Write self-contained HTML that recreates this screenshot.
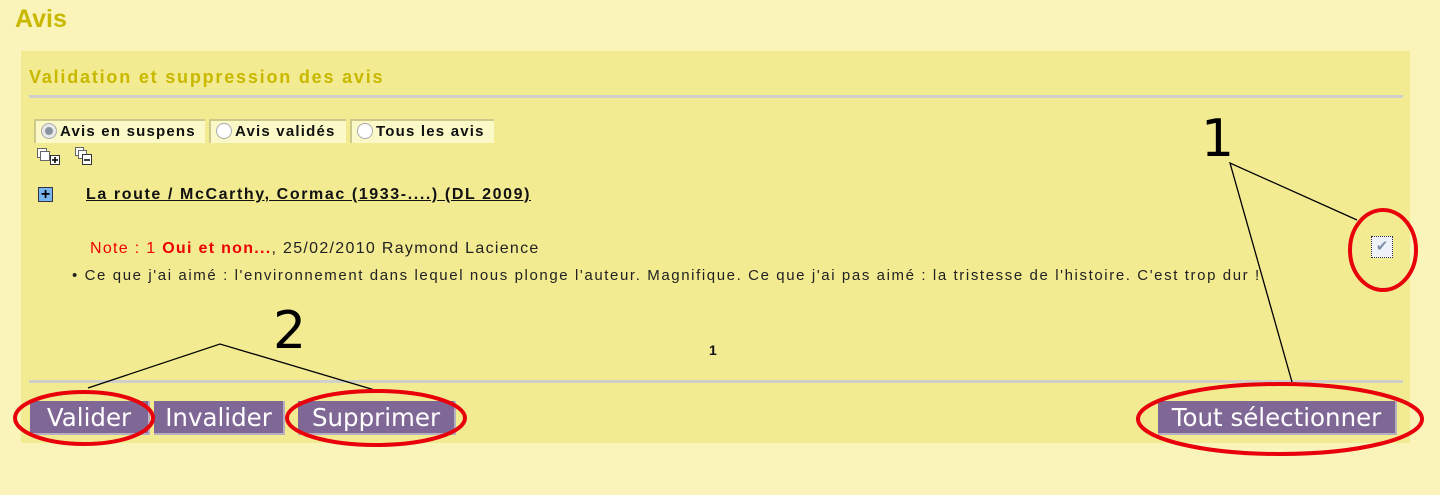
<!DOCTYPE html>
<html><head><meta charset="utf-8"><style>
body{margin:0;width:1440px;height:495px;background:#faf4bb;position:relative;overflow:hidden;font-family:"Liberation Sans",sans-serif}
.a{position:absolute}
.panel{left:21px;top:51px;width:1389px;height:392px;background:#f3eb92}
.hr{height:3px;background:#cfcfcb;left:29px;width:1374px}
.btn{position:absolute;top:401px;height:34px;background:#806896;color:#fff;font-family:"DejaVu Sans",sans-serif;font-size:24.5px;line-height:33px;text-align:center;border-right:2px solid #b7b0c0;border-bottom:2px solid #b7b0c0;box-sizing:border-box;white-space:nowrap}
.tab{position:absolute;top:119px;height:24px;background:#fbf9c8;border-left:2px solid #cdc98a;border-top:2px solid #cdc98a;box-sizing:border-box;font-weight:bold;font-size:15px;line-height:21px;color:#111;letter-spacing:1.2px;white-space:nowrap}
.rad{display:inline-block;width:16px;height:16px;border-radius:50%;border:1px solid #aaa;background:#fff;vertical-align:-3px;margin:0 3px 0 5px;box-sizing:border-box}
</style></head><body>
<div class="a" style="left:15px;top:5px;font-size:25px;font-weight:bold;color:#c8b800">Avis</div>
<div class="a panel"></div>
<div class="a" style="left:29px;top:67px;font-size:18px;font-weight:bold;color:#c8b800;letter-spacing:1.8px;white-space:nowrap">Validation et suppression des avis</div>
<div class="a hr" style="top:95px"></div>
<div class="tab" style="left:34px;width:171px"><span class="rad" style="background:radial-gradient(circle,#8a93a0 35%,#e8e8e8 45%)"></span>Avis en suspens</div>
<div class="tab" style="left:209px;width:137px"><span class="rad"></span>Avis validés</div>
<div class="tab" style="left:350px;width:144px"><span class="rad"></span>Tous les avis</div>
<svg class="a" style="left:36px;top:146px" width="70" height="24">
<rect x="1.5" y="2.5" width="9" height="9" fill="#fff" stroke="#666"/><rect x="4.5" y="5.5" width="9" height="9" fill="#fff" stroke="#666"/><rect x="14.5" y="9.5" width="9" height="9" fill="#fff" stroke="#333"/><path d="M16 14h6M19 11v6" stroke="#000" stroke-width="1.5"/>
<rect x="39.5" y="1.5" width="8" height="8" fill="#fff" stroke="#666"/><rect x="42.5" y="4.5" width="8" height="8" fill="#fff" stroke="#666"/><rect x="46.5" y="8.5" width="9" height="10" fill="#fff" stroke="#333"/><path d="M48 14h6" stroke="#000" stroke-width="1.5"/>
</svg>
<div class="a" style="left:38px;top:187px;width:15px;height:15px;background:#7ab6ee;border:1px solid #334;box-sizing:border-box;text-align:center;font-size:16px;line-height:13px;font-weight:bold">+</div>
<div class="a" style="left:86px;top:186px;font-size:16px;font-weight:bold;text-decoration:underline;color:#111;letter-spacing:1.6px;white-space:nowrap">La route / McCarthy, Cormac (1933-....) (DL 2009)</div>
<div class="a" style="left:90px;top:240px;font-size:16px;color:#222;letter-spacing:1.3px;white-space:nowrap"><span style="color:#e00">Note : 1 <b>Oui et non...</b></span>, 25/02/2010 Raymond Lacience</div>
<div class="a" style="left:72px;top:267px;font-size:15px;color:#222;letter-spacing:1.6px;white-space:nowrap">•&nbsp;Ce que j'ai aimé : l'environnement dans lequel nous plonge l'auteur. Magnifique. Ce que j'ai pas aimé : la tristesse de l'histoire. C'est trop dur !</div>
<div class="a" style="left:1371px;top:236px;width:22px;height:22px;border:1px dotted #333;box-sizing:border-box;background:#eef2f8;color:#8090a8;font-size:15px;line-height:19px;text-align:center">✔</div>
<div class="a" style="left:709px;top:342px;font-size:14px;font-weight:bold;color:#111">1</div>
<div class="a hr" style="top:380px"></div>
<div class="btn" style="left:30px;width:120px">Valider</div>
<div class="btn" style="left:154px;width:131px">Invalider</div>
<div class="btn" style="left:298px;width:158px">Supprimer</div>
<div class="btn" style="left:1158px;width:239px">Tout sélectionner</div>
<svg class="a" style="left:0;top:0" width="1440" height="495">
<text x="1201" y="156" font-family="DejaVu Sans" font-size="52" fill="#000">1</text>
<text x="273" y="348" font-family="DejaVu Sans" font-size="52" fill="#000">2</text>
<path d="M1357 220L1230 163L1292 382" fill="none" stroke="#000" stroke-width="1.3"/>
<path d="M88 388L220 344L378 391" fill="none" stroke="#000" stroke-width="1.3"/>
<g fill="none" stroke="#e8000a" stroke-width="4">
<ellipse cx="1383" cy="250" rx="33" ry="40"/>
<ellipse cx="1280" cy="419" rx="142" ry="35"/>
<ellipse cx="84" cy="418" rx="69" ry="26"/>
<ellipse cx="376" cy="418" rx="89" ry="27"/>
</g></svg>
</body></html>
